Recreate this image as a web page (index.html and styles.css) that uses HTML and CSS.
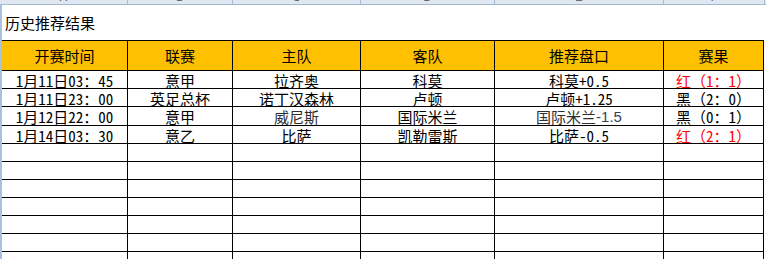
FILE: index.html
```html
<!DOCTYPE html>
<html lang="zh-CN">
<head>
<meta charset="utf-8">
<title>历史推荐结果</title>
<link rel="stylesheet" href="styles.css">
</head>
<body>
<div class="page">
  <div class="colhead">
    <div class="ch w1"><span>A</span></div>
    <div class="ch w2"><span>B</span></div>
    <div class="ch w3"><span>C</span></div>
    <div class="ch w4"><span>D</span></div>
    <div class="ch w5"><span>E</span></div>
    <div class="ch w6"><span>F</span></div>
  </div>
  <div class="sheet">
    <div class="rowhead"></div>
    <div class="content">
      <div class="title">历史推荐结果</div>
      <div class="grid">
        <div class="cell head">开赛时间</div>
        <div class="cell head">联赛</div>
        <div class="cell head">主队</div>
        <div class="cell head">客队</div>
        <div class="cell head">推荐盘口</div>
        <div class="cell head">赛果</div>

        <div class="cell">1月11日03：45</div>
        <div class="cell">意甲</div>
        <div class="cell">拉齐奥</div>
        <div class="cell">科莫</div>
        <div class="cell">科莫+0.5</div>
        <div class="cell red">红（1：1）</div>

        <div class="cell">1月11日23：00</div>
        <div class="cell">英足总杯</div>
        <div class="cell">诺丁汉森林</div>
        <div class="cell">卢顿</div>
        <div class="cell">卢顿+1.25</div>
        <div class="cell">黑（2：0）</div>

        <div class="cell">1月12日22：00</div>
        <div class="cell">意甲</div>
        <div class="cell gray">威尼斯</div>
        <div class="cell">国际米兰</div>
        <div class="cell gray">国际米兰<span class="latin">-1.5</span></div>
        <div class="cell">黑（0：1）</div>

        <div class="cell">1月14日03：30</div>
        <div class="cell">意乙</div>
        <div class="cell">比萨</div>
        <div class="cell">凯勒雷斯</div>
        <div class="cell">比萨-0.5</div>
        <div class="cell red">红（2：1）</div>

        <div class="cell"></div><div class="cell"></div><div class="cell"></div><div class="cell"></div><div class="cell"></div><div class="cell"></div>
        <div class="cell"></div><div class="cell"></div><div class="cell"></div><div class="cell"></div><div class="cell"></div><div class="cell"></div>
        <div class="cell"></div><div class="cell"></div><div class="cell"></div><div class="cell"></div><div class="cell"></div><div class="cell"></div>
        <div class="cell"></div><div class="cell"></div><div class="cell"></div><div class="cell"></div><div class="cell"></div><div class="cell"></div>
        <div class="cell"></div><div class="cell"></div><div class="cell"></div><div class="cell"></div><div class="cell"></div><div class="cell"></div>
        <div class="cell"></div><div class="cell"></div><div class="cell"></div><div class="cell"></div><div class="cell"></div><div class="cell"></div>
        <div class="cell"></div><div class="cell"></div><div class="cell"></div><div class="cell"></div><div class="cell"></div><div class="cell"></div>
      </div>
    </div>
  </div>
</div>
</body>
</html>
```

FILE: styles.css
```css
html, body {
  margin: 0;
  padding: 0;
  background: #ffffff;
}

.page {
  width: 766px;
  height: 259px;
  overflow: hidden;
  font-family: "Noto Sans Mono CJK SC", "Noto Sans CJK SC", sans-serif;
  font-size: 15px;
  color: #000000;
}

.colhead {
  display: flex;
  height: 4px;
  background: #e1e7f0;
  border-bottom: 1px solid #a3bad3;
  overflow: hidden;
}

.ch {
  flex: none;
  height: 4px;
  border-right: 1px solid #a3bad3;
  overflow: hidden;
  text-align: center;
  font-family: "Liberation Sans", Arial, sans-serif;
  font-size: 11px;
  color: #4d5560;
}

.ch span {
  display: block;
  line-height: 11px;
  margin-top: -8px;
}

.w1 { width: 127px; }
.w2 { width: 104px; }
.w3 { width: 127px; }
.w4 { width: 133px; }
.w5 { width: 168px; }
.w6 { width: 100px; }

.sheet {
  display: flex;
}

.rowhead {
  flex: none;
  width: 2px;
  background: #a9c1dd;
}

.content {
  flex: none;
}

.title {
  height: 35px;
  display: flex;
  align-items: center;
  padding-left: 3px;
  box-sizing: border-box;
}

.grid {
  display: grid;
  width: max-content;
  grid-template-columns: 125px 104px 127px 133px 168px 99px;
  grid-template-rows: 29px 17px 17px 18px 17px repeat(7, 17px);
  gap: 1px;
  padding: 1px 1px 0 0;
  background: #000000;
}

.cell {
  background: #ffffff;
  display: flex;
  align-items: center;
  justify-content: center;
  white-space: nowrap;
  line-height: 15px;
  padding-top: 1px;
  box-sizing: border-box;
}

.cell.head {
  background: #ffc000;
  padding-top: 0;
}

.red {
  color: #ff0000;
}

.gray {
  color: #2e2e2e;
}

.latin {
  font-family: "Liberation Sans", Arial, sans-serif;
  color: #34425a;
}
```
